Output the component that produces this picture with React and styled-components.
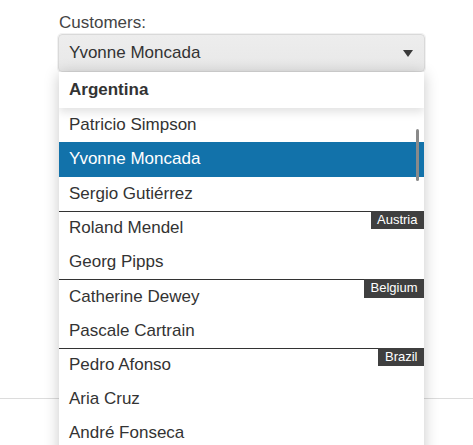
import React from "react";
import styled, { createGlobalStyle } from "styled-components";

const GlobalStyle = createGlobalStyle`
  html, body {
    margin: 0;
    padding: 0;
    background: #fff;
    overflow: hidden;
  }
  body {
    font-family: "Liberation Sans", Arial, sans-serif;
    color: #333;
  }
`;

const Page = styled.div`
  width: 473px;
  height: 445px;
  box-sizing: border-box;
  padding-top: 13px;
`;

const Field = styled.div`
  margin-left: 58px;
  width: 367px;
  position: relative;
`;

const Label = styled.label`
  display: block;
  margin-left: 1px;
  font-size: 17px;
  line-height: 19px;
  color: #444;
  margin-bottom: 2px;
`;

const Picker = styled.div`
  height: 38px;
  box-sizing: border-box;
  border: 1px solid #d9d9d9;
  border-radius: 4px;
  background: linear-gradient(#ededed, #e8e8e8);
  box-shadow: 0 0 0 1px #f1f1f1;
  display: flex;
  align-items: center;
  justify-content: space-between;
  padding: 0 11px 0 10px;
  font-size: 17px;
  color: #333;
`;

const Arrow = styled.span`
  width: 0;
  height: 0;
  border-left: 5px solid transparent;
  border-right: 5px solid transparent;
  border-top: 7px solid #3a3a3a;
`;

const Popup = styled.div`
  position: absolute;
  top: 100%;
  left: 1px;
  width: 365px;
  height: 400px;
  overflow: hidden;
  background: #fff;
  box-shadow: 0 2px 14px rgba(0, 0, 0, 0.22);
  z-index: 5;
`;

const GroupHeader = styled.div`
  position: relative;
  z-index: 2;
  height: 36px;
  box-sizing: border-box;
  padding-left: 10px;
  display: flex;
  align-items: center;
  font-size: 17px;
  font-weight: bold;
  color: #333;
  background: #fff;
  box-shadow: 0 4px 9px rgba(0, 0, 0, 0.12);
`;

const Item = styled.div`
  position: relative;
  height: 34.25px;
  box-sizing: border-box;
  padding-left: 10px;
  display: flex;
  align-items: center;
  font-size: 17px;
  color: ${(p) => (p.$selected ? "#fff" : "#333")};
  background: ${(p) => (p.$selected ? "#1272aa" : "#fff")};
  border-top: ${(p) => (p.$first ? "1px solid #333" : "none")};
`;

const GroupTag = styled.span`
  position: absolute;
  top: -1px;
  right: 0;
  height: 18.5px;
  line-height: 18.5px;
  padding: 0 6.5px;
  font-size: 13px;
  color: #fff;
  background: #3f3f3f;
`;

const ScrollThumb = styled.div`
  position: absolute;
  top: 57px;
  right: 5px;
  width: 3px;
  height: 52px;
  border-radius: 2px;
  background: #8a8a8a;
  z-index: 3;
`;

const Footer = styled.div`
  margin-top: 326px;
  border-top: 1px solid #dcdcdc;
`;

const groups = [
  { country: "Argentina", names: ["Patricio Simpson", "Yvonne Moncada", "Sergio Gutiérrez"] },
  { country: "Austria", names: ["Roland Mendel", "Georg Pipps"] },
  { country: "Belgium", names: ["Catherine Dewey", "Pascale Cartrain"] },
  { country: "Brazil", names: ["Pedro Afonso", "Aria Cruz", "André Fonseca"] },
];

export default function App() {
  const selected = "Yvonne Moncada";
  return (
    <>
      <GlobalStyle />
      <Page>
        <Field>
          <Label>Customers:</Label>
          <Picker>
            <span>{selected}</span>
            <Arrow />
          </Picker>
          <Popup>
            <GroupHeader>Argentina</GroupHeader>
            <ScrollThumb />
            {groups.map((g, gi) =>
              g.names.map((n, i) => (
                <Item key={n} $selected={n === selected} $first={gi > 0 && i === 0}>
                  {n}
                  {gi > 0 && i === 0 && <GroupTag>{g.country}</GroupTag>}
                </Item>
              ))
            )}
          </Popup>
        </Field>
        <Footer />
      </Page>
    </>
  );
}
